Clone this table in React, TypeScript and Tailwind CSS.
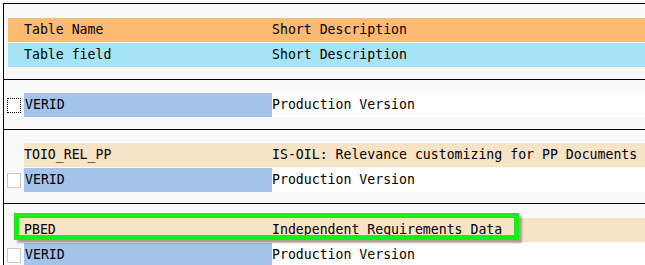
import React from "react";

const mono = "font-['DejaVu_Sans_Mono','Liberation_Mono',monospace] text-[13.2px] leading-6 text-black whitespace-nowrap";

const HeaderRow = ({ name, desc, color }: { name: string; desc: string; color: string }) => (
    <div className={`ml-[4px] flex h-6 ${color}`}>
        <div className="w-[264px] pl-[16px]">{name}</div>
        <div className="flex-1">{desc}</div>
    </div>
);

const TableRow = ({ name, desc, indent = "ml-[20px]" }: { name: string; desc: string; indent?: string }) => (
    <div className={`${indent} flex h-6 bg-[#f7e3c6]`}>
        <div className="w-[248px] shrink-0">{name}</div>
        <div className="flex-1">{desc}</div>
    </div>
);

const FieldRow = ({ focused = false }: { focused?: boolean }) => (
    <div className="flex h-6">
        <div className="flex w-[20px] shrink-0 items-center pl-[3px]">
            <div
                className={
                    focused
                        ? "h-[15px] w-[14px] border border-dotted border-black bg-white"
                        : "h-[15px] w-[14px] border border-[#c9c9d2] bg-white"
                }
            />
        </div>
        <div className="w-[248px] shrink-0 bg-[#a3c3e8] pl-px">VERID</div>
        <div className="flex-1 bg-white">Production Version</div>
    </div>
);

export default function App() {
    return (
        <div className="h-[265px] w-[645px] overflow-hidden bg-white pl-[3px] pt-[3px]">
            <div className={`h-full border-l border-t border-black bg-[#f9f9f9] ${mono}`}>
                <div className="flex flex-col gap-px pb-[12px] pt-[14px]">
                    <HeaderRow name="Table Name" desc="Short Description" color="bg-[#fdba72]" />
                    <HeaderRow name="Table field" desc="Short Description" color="bg-[#a5e4f4]" />
                </div>
                <div className="border-t border-black pb-[12px] pt-[13px]">
                    <FieldRow focused />
                </div>
                <div className="flex flex-col gap-px border-t border-black pb-[11px] pt-[13px]">
                    <TableRow name="TOIO_REL_PP" desc="IS-OIL: Relevance customizing for PP Documents" />
                    <FieldRow />
                </div>
                <div className="relative flex flex-col gap-px border-t border-black pt-[14px]">
                    <TableRow name="PBED" desc="Independent Requirements Data" indent="ml-[16px] pl-[4px]" />
                    <FieldRow />
                    <div className="absolute left-[10px] top-[9px] h-[27px] w-[505px] border-[5px] border-[#14f014] shadow-[3px_3px_2px_rgba(0,0,0,0.3)]" />
                </div>
            </div>
        </div>
    );
}
